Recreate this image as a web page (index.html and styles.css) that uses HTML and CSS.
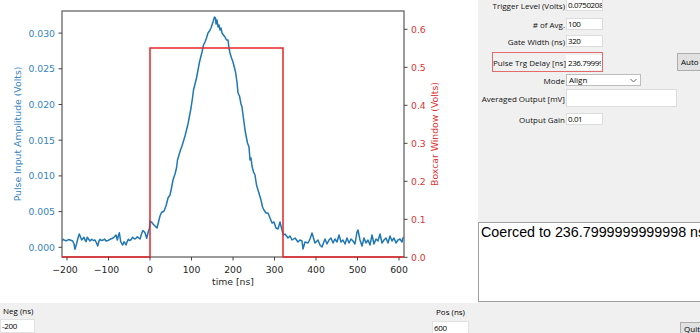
FILE: index.html
```html
<!DOCTYPE html>
<html>
<head>
<meta charset="utf-8">
<link rel="stylesheet" href="styles.css">
</head>
<body>
<div class="app">
  <div class="top">
    <div class="figure">
      <svg width="478" height="303" viewBox="0 0 478 303" xmlns="http://www.w3.org/2000/svg">
        <defs><clipPath id="ax"><rect x="62" y="11" width="342" height="246"/></clipPath></defs>
        <g clip-path="url(#ax)">
          <polyline fill="none" stroke="#1f77b4" stroke-width="1.5" stroke-linejoin="round" points="62,241 63.3,239.3 65,240.5 66.7,240.7 68.5,239.5 70,240 71.5,240.5 72.7,241 74,244 75,249.3 76.7,243.3 78,238 79.3,234 80.5,237 81.7,240 83,238.5 84,237.3 85,240 86,241.7 87.3,237.3 88.5,239 90,241 91.7,239.3 93.5,240.5 95,240 96.5,243 97.7,246 99,241 100,239.3 101.5,240.5 103.3,240 104.5,239 106,241 108,240.5 110,239.3 112,238.5 114,237.3 116,235 117.3,240 118.3,236 119.3,232.7 120.7,241.7 122,244 122.7,245 124,241.7 125,243 126,245 127,242 128.3,239.3 129.5,240.5 130.7,240 132.7,237.3 134,238.5 135,239 136.2,238 137.3,236.7 138.7,238 140,239 141.5,234 142.7,230.7 144,231.5 145,232.7 146.7,238.3 148.3,231.7 149.5,228 150,221 151.5,222 153,224 155,226 157,228 158.5,222 160,216 161.5,212.5 164,211 166,206 168,198 170,195 171.5,188 173,180 175,174 176.5,168 177.5,160 179,155 180.5,150 182,146 183.5,141 185,136 186.5,130 188,124 189.5,116 191,108 192.5,98 193.5,90 195,84 196.5,78 198,70 199.5,62 201,56 202,52 203.5,45 205,42 206.5,38 208,33 209.5,31 211,28 212,25 213,22 214.5,17 215.5,18 216,24 217,20 218,27 219,25 220,30 221,28 222,33 223.5,35 225,37 226.5,40 228,40 229,48 230,53 231.5,58 233,62 234.5,68 235.5,72 237,82 238,93 239.5,96 241,104 242,107 243,115 244,122 245,130 246.5,138 247.5,143 249,147 250,160 251,158 252,166 253.5,172 255,175 256.5,185 258,190 259.5,195 261,200 262.5,207 264,210 266,213 268,213 270,218 272,223 274,222 276,228 278,229 280,222 282,230 283.5,235 285,234 288,238 290,236 292,240 295,238 298,242 300,240 302,241 303,249 305,242 308,243 310,239 312,233 315,243 318,240 320,245 322,247 325,239 327,244 329,240 331,238 333,243 335,239 337,242 339,235 341,242 343,240 345,244 347,238 349,243 351,239 353,241 355,244 357,232 358,230 360,240 362,246 364,238 366,243 368,240 370,245 372,235 374,244 376,239 378,241 380,234 382,243 384,240 386,238 388,243 390,236 392,241 394,238 396,243 398,240 400,239 402,242 403,238 404,237"/>
        </g>
        <rect x="62" y="11" width="342" height="246" fill="none" stroke="#666" stroke-width="1.3"/>
        <polyline fill="none" stroke="#e8262a" stroke-width="1.5" points="62,257 150,257 150,48 283,48 283,257 404,257"/>
        <g stroke="#444" stroke-width="1">
          <line x1="58.5" y1="33.1" x2="62" y2="33.1"/>
          <line x1="58.5" y1="68.8" x2="62" y2="68.8"/>
          <line x1="58.5" y1="104.5" x2="62" y2="104.5"/>
          <line x1="58.5" y1="140.2" x2="62" y2="140.2"/>
          <line x1="58.5" y1="175.9" x2="62" y2="175.9"/>
          <line x1="58.5" y1="211.6" x2="62" y2="211.6"/>
          <line x1="58.5" y1="247.3" x2="62" y2="247.3"/>
          <line x1="404" y1="29.3" x2="407.5" y2="29.3"/>
          <line x1="404" y1="67.3" x2="407.5" y2="67.3"/>
          <line x1="404" y1="105.3" x2="407.5" y2="105.3"/>
          <line x1="404" y1="143.3" x2="407.5" y2="143.3"/>
          <line x1="404" y1="181.3" x2="407.5" y2="181.3"/>
          <line x1="404" y1="219.3" x2="407.5" y2="219.3"/>
          <line x1="404" y1="257.3" x2="407.5" y2="257.3"/>
          <line x1="67" y1="257" x2="67" y2="260.5"/>
          <line x1="108.5" y1="257" x2="108.5" y2="260.5"/>
          <line x1="150" y1="257" x2="150" y2="260.5"/>
          <line x1="191.5" y1="257" x2="191.5" y2="260.5"/>
          <line x1="233" y1="257" x2="233" y2="260.5"/>
          <line x1="274.5" y1="257" x2="274.5" y2="260.5"/>
          <line x1="316" y1="257" x2="316" y2="260.5"/>
          <line x1="357.5" y1="257" x2="357.5" y2="260.5"/>
          <line x1="399" y1="257" x2="399" y2="260.5"/>
        </g>
        <g class="tl blue" text-anchor="end">
          <text x="55" y="36.5">0.030</text>
          <text x="55" y="72.2">0.025</text>
          <text x="55" y="107.9">0.020</text>
          <text x="55" y="143.6">0.015</text>
          <text x="55" y="179.3">0.010</text>
          <text x="55" y="215">0.005</text>
          <text x="55" y="250.7">0.000</text>
        </g>
        <g class="tl red">
          <text x="411" y="32.7">0.6</text>
          <text x="411" y="70.7">0.5</text>
          <text x="411" y="108.7">0.4</text>
          <text x="411" y="146.7">0.3</text>
          <text x="411" y="184.7">0.2</text>
          <text x="411" y="222.7">0.1</text>
          <text x="411" y="260.7">0.0</text>
        </g>
        <g class="tl dark" text-anchor="middle">
          <text x="65" y="272.7">−200</text>
          <text x="106.5" y="272.7">−100</text>
          <text x="150" y="272.7">0</text>
          <text x="191.5" y="272.7">100</text>
          <text x="233" y="272.7">200</text>
          <text x="274.5" y="272.7">300</text>
          <text x="316" y="272.7">400</text>
          <text x="357.5" y="272.7">500</text>
          <text x="399" y="272.7">600</text>
          <text x="233" y="285">time [ns]</text>
        </g>
        <text class="tl blue" text-anchor="middle" transform="translate(20.5,134) rotate(-90)">Pulse Input Amplitude (Volts)</text>
        <text class="tl red" text-anchor="middle" transform="translate(437.5,134) rotate(-90)">Boxcar Window (Volts)</text>
      </svg>
    </div>
    <div class="side">
      <div class="form">
        <div class="row r1"><span class="lbl">Trigger Level (Volts)</span><span class="entry">0.0750208</span></div>
        <div class="row r2"><span class="lbl"># of Avg.</span><span class="entry">100</span></div>
        <div class="row r3"><span class="lbl">Gate Width (ns)</span><span class="entry">320</span></div>
        <div class="row r4">
          <div class="frame"><span class="lbl lbl-in">Pulse Trg Delay [ns]</span><span class="entry entry-in">236.79999</span></div>
          <span class="btn btn-auto">Auto</span>
        </div>
        <div class="row r5"><span class="lbl">Mode</span>
          <span class="combo"><span>Align</span><svg width="7" height="5" viewBox="0 0 7 5"><polyline points="0.5,1 3.5,4 6.5,1" fill="none" stroke="#666" stroke-width="1"/></svg></span>
        </div>
        <div class="row r6"><span class="lbl">Averaged Output [mV]</span><span class="entry entry-wide"></span></div>
        <div class="row r7"><span class="lbl">Output Gain</span><span class="entry">0.01</span></div>
      </div>
      <div class="output">Coerced to 236.7999999999998 ns</div>
    </div>
  </div>
  <div class="bottom">
    <div class="field fneg"><span class="blbl">Neg (ns)</span><span class="bentry">-200</span></div>
    <div class="field fpos"><span class="blbl">Pos (ns)</span><span class="bentry">600</span></div>
    <span class="btn btn-quit">Quit</span>
  </div>
</div>
</body>
</html>
```
FILE: styles.css
```css
* { box-sizing: border-box; }
html, body { margin: 0; padding: 0; }
body {
  background: #f0f0f0;
  font-family: "Open Sans", "Noto Sans", sans-serif;
  font-size: 8px;
  color: #000;
  overflow: hidden;
}
.app { width: 700px; height: 333px; overflow: hidden; }
.top { display: flex; height: 303px; }
.figure { width: 478px; height: 303px; background: #fff; flex: none; }
.figure svg { display: block; }
.tl { font-family: "DejaVu Sans", sans-serif; font-size: 9.3px; }
.blue { fill: #3584c0; }
.red { fill: #dd3535; }
.dark { fill: #262626; }

.side { width: 222px; flex: none; display: flex; flex-direction: column; overflow: hidden; }
.form { height: 222px; flex: none; display: flex; flex-direction: column; }
.row { display: flex; align-items: center; flex: none; }
.lbl { width: 88px; flex: none; text-align: right; padding-right: 1px; white-space: nowrap; line-height: 11px; color: #111; }
.entry {
  flex: none; width: 37px; height: 12px;
  background: #fff; border: 1px solid #dcdcdc;
  padding-left: 1px; line-height: 10px;
  letter-spacing: -0.4px;
  overflow: hidden; white-space: nowrap;
}
.r1 { margin-top: -1px; }
.r2 { margin-top: 7px; }
.r3 { margin-top: 5px; }
.r4 { margin-top: 5px; height: 20px; padding-left: 14px; }
.r5 { margin-top: 2px; }
.r6 { margin-top: 3px; }
.r7 { margin-top: 6px; }
.frame { display: flex; align-items: center; height: 20px; border: 1px solid #e26b6b; flex: none; }
.lbl-in { width: 73px; }
.entry-in { width: 36px; height: 15px; line-height: 13px; border-color: #fff; }
.entry-wide { width: 111px; height: 18px; }
.btn {
  flex: none; display: block; height: 18px; width: 30px;
  background: #e1e1e1; border: 1px solid #adadad;
  padding-left: 3px; line-height: 16px; white-space: nowrap;
}
.btn-auto { margin-left: 74px; }
.combo {
  flex: none; width: 75px; height: 12px;
  display: flex; align-items: center; justify-content: space-between;
  background: #fff; border: 1px solid #bdbdbd;
  padding: 0 3px 0 2px; line-height: 10px;
}
.combo svg { display: block; }
.output {
  flex: none; width: 240px; height: 80px;
  background: #fff; border: 1px solid #a0a0a0;
  font-family: "Liberation Sans", Arial, sans-serif; font-size: 14.3px;
  padding: 1px 0 0 2px; line-height: 16px;
  white-space: nowrap; overflow: hidden;
}

.bottom { display: flex; height: 30px; align-items: flex-start; }
.field { display: flex; flex-direction: column; flex: none; }
.fneg { width: 35px; }
.fneg .blbl { height: 16px; line-height: 16px; padding-left: 3px; }
.fpos { width: 37px; margin-left: 397px; }
.fpos .blbl { height: 18px; line-height: 18px; text-align: center; }
.blbl { white-space: nowrap; }
.bentry {
  height: 14px; background: #fff; border: 1px solid #e2e2e2;
  padding-left: 1px; line-height: 12px; white-space: nowrap;
  letter-spacing: -0.3px;
}
.btn-quit { margin-left: 211px; margin-top: 19px; height: 14px; line-height: 12px; }
```
